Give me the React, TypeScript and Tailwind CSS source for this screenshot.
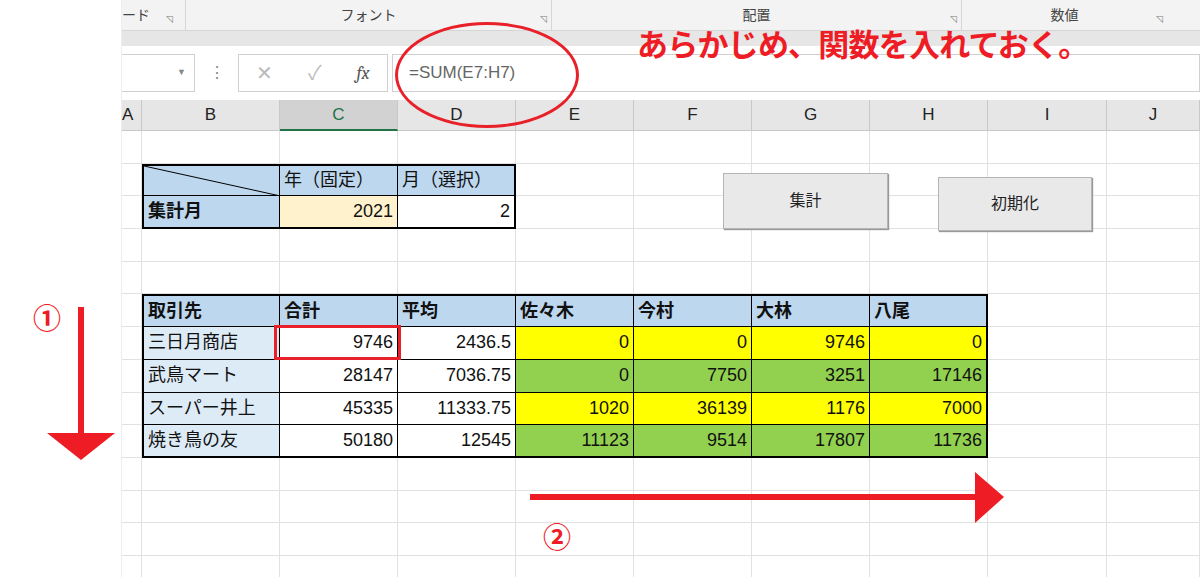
import React from 'react'

const cols = [20, 138, 118, 118, 118, 118, 118, 118, 119, 93]
const letters = ['A', 'B', 'C', 'D', 'E', 'F', 'G', 'H', 'I', 'J']

type Cell = { t?: string; bg?: string; bold?: boolean; right?: boolean; diag?: boolean; er?: boolean; eb?: boolean }

const H = 'bg-[#bdd7ee]'
const N = 'bg-[#ddebf7]'
const Y = 'bg-[#ffff00]'
const G = 'bg-[#92d050]'

const data: Record<string, Cell> = {
  '1-1': { bg: H, diag: true },
  '1-2': { t: '年（固定）', bg: H },
  '1-3': { t: '月（選択）', bg: H, er: true },
  '2-1': { t: '集計月', bg: H, bold: true, eb: true },
  '2-2': { t: '2021', bg: 'bg-[#fff2cc]', right: true, eb: true },
  '2-3': { t: '2', bg: 'bg-white', right: true, er: true, eb: true },
}
const heads = ['取引先', '合計', '平均', '佐々木', '今村', '大林', '八尾']
heads.forEach((h, i) => (data[`5-${i + 1}`] = { t: h, bg: H, bold: true, er: i === 6 }))
const rows = [
  ['三日月商店', '9746', '2436.5', '0', '0', '9746', '0'],
  ['武鳥マート', '28147', '7036.75', '0', '7750', '3251', '17146'],
  ['スーパー井上', '45335', '11333.75', '1020', '36139', '1176', '7000'],
  ['焼き鳥の友', '50180', '12545', '11123', '9514', '17807', '11736'],
]
rows.forEach((r, ri) =>
  r.forEach((v, ci) => {
    const bg = ci === 0 ? N : ci < 3 ? 'bg-white' : ri % 2 === 0 ? Y : G
    data[`${ri + 6}-${ci + 1}`] = { t: v, bg, right: ci > 0, er: ci === 6, eb: ri === 3 }
  })
)

export default function App() {
  return (
    <div className="relative w-[1200px] h-[577px] overflow-hidden bg-white" style={{ fontFamily: '"Liberation Sans", "Noto Sans CJK JP", sans-serif' }}>
      <div className="flex">
        <div className="w-[122px] shrink-0 border-r border-[#eee]" />
        <div className="flex-1">
          {/* ribbon */}
          <div className="h-[30px] bg-[#f3f3f3] flex text-[14px] text-[#444]">
            <div className="w-[64px] border-r border-[#d6d6d6] flex items-end pb-1 gap-4 pl-0">ード<span className="text-[9px] text-[#777]">◹</span></div>
            <div className="w-[366px] border-r border-[#d6d6d6] flex items-end justify-center pb-1 relative">フォント<span className="absolute right-1 bottom-1 text-[9px] text-[#777]">◹</span></div>
            <div className="w-[410px] border-r border-[#d6d6d6] flex items-end justify-center pb-1 relative">配置<span className="absolute right-1 bottom-1 text-[9px] text-[#777]">◹</span></div>
            <div className="w-[205px] flex items-end justify-center pb-1 relative">数値<span className="absolute right-1 bottom-1 text-[9px] text-[#777]">◹</span></div>
          </div>
          <div className="h-[16px] bg-[#e6e6e6] border-t border-[#d6d6d6]" />
          {/* formula bar */}
          <div className="h-[54px] bg-white flex items-center text-[#888]">
            <div className="w-[73px] h-[38px] border border-[#d0d0d0] border-l-0 flex items-center justify-end pr-2 text-[9px]">▼</div>
            <div className="w-[43px] text-center">⋮</div>
            <div className="w-[150px] h-[38px] border border-[#d0d0d0] flex items-center justify-around text-[20px] text-[#bbb]">
              <span>✕</span><span>✓</span><span className="italic font-serif text-[#555] text-[18px]">fx</span>
            </div>
            <div className="flex-1 h-[38px] border border-[#d0d0d0] ml-[4px] flex items-center pl-[16px] text-[17px] text-[#666]">=SUM(E7:H7)</div>
          </div>
          {/* sheet */}
          <div className="grid" style={{ gridTemplateColumns: cols.map(c => c + 'px').join(' ') }}>
            {letters.map((l, i) => (
              <div key={l} className={`h-[31px] flex items-center justify-center text-[17px] border-r border-b border-[#c8c8c8] ${i === 2 ? 'bg-[#d2d2d2] text-[#217346] border-b-2 border-b-[#217346]' : 'bg-[#e6e6e6] text-[#222]'} ${i === 0 ? 'justify-start' : ''}`}>{l}</div>
            ))}
            {Array.from({ length: 14 }).flatMap((_, r) =>
              cols.map((_, c) => {
                const d = data[`${r}-${c}`]
                if (!d)
                  return <div key={`${r}-${c}`} className="h-[32.7px] border-r border-b border-[#e1e1e1]" />
                return (
                  <div key={`${r}-${c}`} className={`relative h-[32.7px] border-r border-b border-black ${c === 1 ? 'border-l-2' : ''} ${d.er ? 'border-r-2' : ''} ${d.eb ? 'border-b-2' : ''} ${r === 1 || r === 5 ? 'border-t-2 border-t-black' : ''} ${d.bg} flex items-center px-[4px] text-[18px] text-[#111] ${d.right ? 'justify-end' : ''} ${d.bold ? 'font-bold' : ''}`}>
                    {d.diag && (
                      <svg className="absolute inset-0 w-full h-full" preserveAspectRatio="none" viewBox="0 0 100 100"><line x1="0" y1="0" x2="100" y2="100" stroke="#000" strokeWidth="1" vectorEffect="non-scaling-stroke" /></svg>
                    )}
                    {d.t}
                  </div>
                )
              })
            )}
          </div>
        </div>
      </div>

      {/* buttons */}
      <div className="absolute left-[723px] top-[173px] w-[165px] h-[56px] bg-[#e9e9e9] border border-[#b5b5b5] shadow-[1px_1px_1px_#999] flex items-center justify-center text-[16px] text-[#222]">集計</div>
      <div className="absolute left-[938px] top-[177px] w-[154px] h-[54px] bg-[#e9e9e9] border border-[#b5b5b5] shadow-[1px_1px_1px_#999] flex items-center justify-center text-[16px] text-[#222]">初期化</div>

      {/* annotations */}
      <div className="absolute left-[274px] top-[325px] w-[127px] h-[35px] border-[3px] border-[#e8202a]" />
      <div className="absolute left-[395px] top-[22px] w-[184px] h-[106px] rounded-[50%] border-[3px] border-[#e8202a]" />
      <div className="absolute left-[637px] top-[30px] text-[31px] font-bold text-[#ee1c25] leading-none tracking-tight">あらかじめ、関数を入れておく。</div>
      <div className="absolute left-[33px] top-[306px] text-[28px] font-bold text-[#ee1c25] leading-none">①</div>
      <div className="absolute left-[543px] top-[525px] text-[28px] font-bold text-[#ee1c25] leading-none">②</div>
      <svg className="absolute left-0 top-0" width="1200" height="577">
        <line x1="81" y1="307" x2="81" y2="440" stroke="#ee1c25" strokeWidth="6" />
        <polygon points="47,433 115,433 81,460" fill="#ee1c25" />
        <line x1="530" y1="497" x2="980" y2="497" stroke="#ee1c25" strokeWidth="6" />
        <polygon points="975,472 975,523 1004,497" fill="#ee1c25" />
      </svg>
    </div>
  )
}
